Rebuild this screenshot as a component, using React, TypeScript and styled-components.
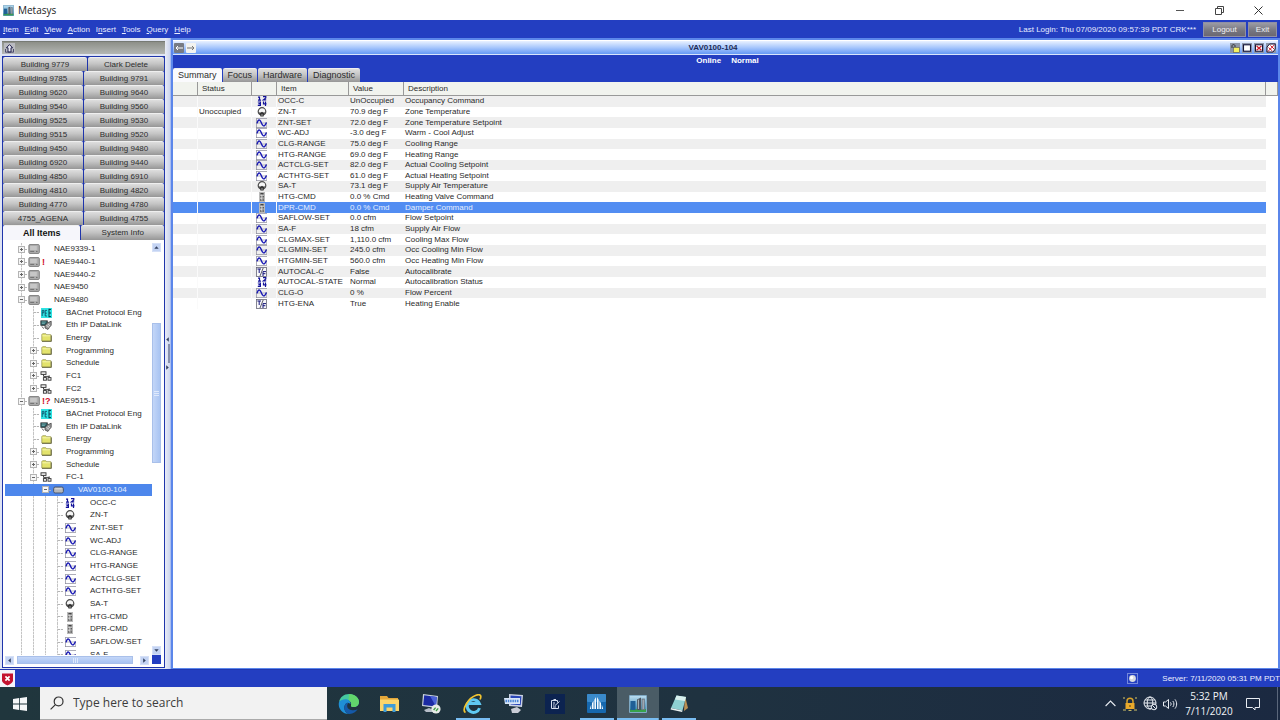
import React from "react";
import styled, { createGlobalStyle, css } from "styled-components";

const ui = `"Liberation Sans", Arial, sans-serif`;
const segoe = `"Open Sans", "Noto Sans", sans-serif`;
const blue = "#233ec1";

const Global = createGlobalStyle`
  *, *::before, *::after { box-sizing: border-box; }
  body { margin: 0; overflow: hidden; background: #fff; color: #2a2a2a; font: 8px/10px ${ui}; }
  button, input { font: inherit; color: inherit; border: 0; margin: 0; padding: 0; border-radius: 0; background: none; }
  svg { display: block; flex: none; }
  ul { list-style: none; margin: 0; padding: 0; }
`;

/* ---------- window frame ---------- */

const Window = styled.div`
  display: flex;
  flex-direction: column;
  height: 100vh;
`;

const TitleBar = styled.header`
  display: flex;
  align-items: center;
  height: 20px;
  padding-left: 3px;
  gap: 4px;
  background: #fff;
  color: #222;
  font: 10px/18px ${segoe};
`;

const WindowButtons = styled.div`
  display: flex;
  margin-left: auto;
  padding-right: 2px;
`;

const WindowButton = styled.button`
  display: grid;
  place-items: center;
  width: 39px;
  height: 19px;
`;

const MenuBar = styled.nav`
  display: flex;
  align-items: center;
  height: 18px;
  padding: 1px 3px 0;
  gap: 6px;
  background: ${blue};
  color: #e8ecff;
`;

const MenuItem = styled.button`
  line-height: 10px;
`;

const Login = styled.span`
  margin-left: auto;
  margin-right: 1px;
`;

const SessionButtons = styled.div`
  display: flex;
  gap: 2px;
`;

const SessionButton = styled.button<{ $w: number }>`
  width: ${(p) => p.$w}px;
  height: 15px;
  color: #f0f0f4;
  background: linear-gradient(#9b9ba4, #75757f 60%, #6b6872);
  border: 1px solid #8f90a5;
`;

const Main = styled.main`
  display: flex;
  flex: 1;
  min-height: 0;
  background: #dfe4f3;
`;

/* ---------- navigation column ---------- */

const Side = styled.aside`
  display: flex;
  flex-direction: column;
  width: 165px;
  padding: 3px 0 1px 2px;
`;

const SideHeader = styled.div`
  display: flex;
  align-items: center;
  height: 13px;
  margin-bottom: 2px;
  padding-left: 2px;
  background: linear-gradient(#8d8f88, #b4b7b4);
  border-top: 1px solid #777a74;
`;

const HomeButton = styled.button`
  display: grid;
  place-items: center;
  width: 11px;
  height: 11px;
  background: #b9bac0;
`;

const SideBody = styled.div`
  display: flex;
  flex-direction: column;
  flex: 1;
  min-height: 0;
  padding: 1px;
  background: #1f35ab;
`;

const ButtonRow = styled.div<{ $cols: string }>`
  display: grid;
  grid-template-columns: ${(p) => p.$cols};
  column-gap: 1px;
`;

const grayTab = css`
  background: linear-gradient(#dedede, #c4c4c4 45%, #969696);
  border-top: 1px solid #efefef;
  border-radius: 2px 2px 0 0;
  color: #2c2c2c;
`;

const ViewButton = styled.button`
  height: 14px;
  line-height: 13px;
  ${grayTab}
`;

const SideTab = styled.button<{ $active?: boolean }>`
  height: 15px;
  line-height: 14px;
  ${grayTab}
  ${(p) => p.$active && css`background: #f6f6fb; color: #111; font-weight: bold; font-size: 9px;`}
`;

const TreePane = styled.div`
  display: grid;
  grid-template-columns: 1fr 12px;
  grid-template-rows: 1fr 12px;
  flex: 1;
  min-height: 0;
  background: #fff;
`;

const TreeView = styled.div`
  min-height: 0;
  overflow: hidden;
  padding: 3px 0 0 2px;
`;

const TreeList = styled.ul`
  display: grid;
  grid-auto-rows: 1fr;
  height: 418px;
`;

const TreeRow = styled.li<{ $selected?: boolean }>`
  display: flex;
  align-items: center;
  min-height: 0;
  padding-left: 10px;
  white-space: nowrap;
  background: ${(p) => (p.$selected ? "#4d87ec" : "transparent")};
  color: ${(p) => (p.$selected ? "#e6efff" : "#2a2a2a")};
`;

const Guide = styled.span<{ $line?: boolean; $end?: boolean; $branch?: boolean }>`
  display: flex;
  align-self: stretch;
  align-items: center;
  flex: none;
  width: 12px;
  padding-left: 3px;
  background-image: ${(p) =>
    [
      p.$line ? "repeating-linear-gradient(#c4c4c4 0 2px, #e8e8e8 2px 3px)" : "none",
      p.$branch ? "repeating-linear-gradient(90deg, #b4b4b4 0 2px, #eee 2px 3px)" : "none",
    ].join(", ")};
  background-repeat: no-repeat;
  background-size: 1px ${(p) => (p.$end ? "50%" : "100%")}, 6px 1px;
  background-position: 6px 0, 7px 6px;
`;

const Toggle = styled.button`
  width: 7px;
  height: 7px;
`;

const TreeIcon = styled.span`
  display: grid;
  place-items: center;
  flex: none;
  width: 14px;
`;

const Mark = styled.span`
  flex: none;
  width: 13px;
  padding-left: 1px;
  color: #d0102a;
  font-size: 9px;
  font-weight: bold;
`;

const VScroll = styled.div`
  display: flex;
  flex-direction: column;
  justify-content: space-between;
  align-items: flex-start;
  padding: 3px 0 0 0;
`;

const HScroll = styled.div`
  display: flex;
  align-items: center;
  justify-content: space-between;
  padding: 0 3px 2px 2px;
`;

const ScrollButton = styled.button`
  display: grid;
  place-items: center;
  width: 9px;
  height: 9px;
  background: #c3d3f3;
  border: 1px solid #d5e0f7;
`;

const Thumb = styled.div<{ $vertical?: boolean }>`
  display: grid;
  place-items: center;
  background: linear-gradient(#c3d6f8, #a9c4f2);
  border: 1px solid #a9c0ea;
  ${(p) =>
    p.$vertical
      ? css`width: 9px; flex: 0 0 140px; margin-top: 71px; margin-bottom: auto; background: linear-gradient(90deg, #c3d6f8, #a9c4f2);`
      : css`height: 8px; flex: 0 0 116px; margin: 0 auto 0 3px;`}
`;

const Corner = styled.div`
  width: 9px;
  height: 9px;
  background: ${blue};
`;

const Splitter = styled.div`
  display: flex;
  flex-direction: column;
  align-items: flex-end;
  justify-content: center;
  gap: 2px;
  width: 6px;
  background: linear-gradient(90deg, #e9ecf6, #ccd5ee);
  border-right: 1px solid #a9bdf0;
`;

const SplitLine = styled.div`
  width: 2px;
  height: 19px;
  background: #8790ad;
`;

/* ---------- detail panel ---------- */

const Panel = styled.section`
  display: flex;
  flex-direction: column;
  flex: 1;
  min-width: 0;
  border: solid #5b86ea;
  border-width: 2px 2px 1px 2px;
  background: #fff;
`;

const PanelBar = styled.div`
  display: grid;
  grid-template-columns: auto 1fr auto;
  align-items: center;
  height: 15px;
  padding: 1px 2px 0 1px;
  background: linear-gradient(#e9f1ff, #b5d0fd 40%, #6599f6);
  border-top: 1px solid #fff;
  border-bottom: 1px solid #d8e4fc;
`;

const IconGroup = styled.div`
  display: flex;
  gap: 2px;
`;

const NavButton = styled.button<{ $dark?: boolean }>`
  display: grid;
  place-items: center;
  width: 10px;
  height: 10px;
  border-radius: 1px;
  background: ${(p) => (p.$dark ? "#777b84" : "#f3f3f0")};
`;

const PanelTitle = styled.h1`
  margin: 0;
  text-align: center;
  font: bold 8px/10px ${ui};
  color: #1b2a55;
`;

const PanelHead = styled.div`
  display: flex;
  flex-direction: column;
  justify-content: space-between;
  height: 27px;
  background: ${blue};
`;

const Status = styled.div`
  display: flex;
  justify-content: center;
  gap: 10px;
  padding: 1px 0 0 4px;
  color: #fff;
  font-weight: bold;
`;

const Tabs = styled.div`
  display: flex;
  gap: 1px;
`;

const Tab = styled.button<{ $active?: boolean }>`
  height: 14px;
  padding: 0 5px;
  font-size: 9px;
  line-height: 13px;
  ${grayTab}
  ${(p) => p.$active && css`background: #fafafd;`}
`;

const Table = styled.table`
  width: 100%;
  height: 227px;
  table-layout: fixed;
  border-collapse: separate;
  border-spacing: 0;
`;

const HeadRow = styled.tr`
  height: 14px;
`;

const HeadCell = styled.th`
  height: 14px;
  padding: 1px 0 0 4px;
  text-align: left;
  font-weight: normal;
  line-height: 10px;
  background: #f1f3ee;
  border-right: 1px solid #999;
  border-bottom: 1px solid #999;
`;

const Row = styled.tr<{ $selected?: boolean }>`
  color: ${(p) => (p.$selected ? "#e6efff" : "#2a2a2a")};
  &:nth-child(odd) td:not(:last-child) { background: #efefef; }
  ${(p) => p.$selected && css`&& td:not(:last-child) { background: #528df2; }`}
`;

const Cell = styled.td<{ $rule?: boolean }>`
  padding: 0 0 0 1px;
  line-height: 10px;
  white-space: nowrap;
  border-right: ${(p) => (p.$rule ? "1px solid #fafafa" : "0")};
`;

const CellIcon = styled.span`
  display: grid;
  justify-content: center;
  padding-right: 6px;
`;

/* ---------- status bar and taskbar ---------- */

const StatusBar = styled.footer`
  display: flex;
  align-items: center;
  height: 18px;
  background: ${blue};
  color: #eef1ff;
  border-top: 1px solid #1f37b0;
`;

const ShieldBox = styled.div`
  display: grid;
  place-items: center;
  width: 15px;
  height: 17px;
  margin-right: auto;
  background: #f4f4fa;
`;

const ServerTime = styled.span`
  padding-left: 24px;
`;

const TaskBar = styled.div`
  display: flex;
  height: 33px;
  background: linear-gradient(90deg, #20363d, #1f3240 55%, #1b2941);
`;

const StartButton = styled.button`
  display: grid;
  place-items: center;
  width: 40px;
`;

const Search = styled.label`
  display: flex;
  align-items: center;
  gap: 9px;
  width: 287px;
  padding-left: 10px;
  background: #f2f2f2;
  border-bottom: 1px solid #aaa;
  color: #333;
`;

const SearchInput = styled.input`
  flex: 1;
  min-width: 0;
  font: 12px/20px ${segoe};
  outline: 0;
  &::placeholder { color: #3c3c3c; opacity: 1; }
`;

const Apps = styled.div`
  display: flex;
  width: 372px;
  margin-left: 1px;
`;

const AppButton = styled.button<{ $open?: boolean; $active?: boolean }>`
  flex: 1;
  display: grid;
  place-items: center;
  background: ${(p) =>
    p.$active
      ? "linear-gradient(#79bdf2, #79bdf2) center bottom / 100% 2px no-repeat, #4a5c66"
      : p.$open
        ? "linear-gradient(#79bdf2, #79bdf2) center bottom / 34px 2px no-repeat"
        : "none"};
`;

const Tray = styled.div`
  display: flex;
  align-items: center;
  margin-left: auto;
  color: #e8ecf2;
`;

const TrayButton = styled.button`
  display: grid;
  place-items: center;
  width: 20px;
  height: 33px;
`;

const Clock = styled.div`
  display: flex;
  flex-direction: column;
  width: 58px;
  text-align: center;
  font: 10px/15px ${segoe};
  color: #f2f4f8;
`;

const Notifications = styled(TrayButton)`
  width: 30px;
`;

const DesktopEdge = styled.div`
  width: 3px;
  height: 33px;
  margin-left: 9px;
  border-left: 1px solid #5b677b;
`;

/* ---------- icons ---------- */

type Kind = "num" | "temp" | "wave" | "cmd" | "tf" | "nae" | "folder" | "net" | "bac" | "eth" | "vav";

const Icon = ({ kind }: { kind: Kind }) => {
  switch (kind) {
    case "num":
      return (
        <svg width="10" height="10" viewBox="0 0 10 10" fill="none" stroke="#12129a" strokeWidth="1.2">
          <path d="M1 1.200h1.500V4M1 4.100h3M6 .7h2.800v1.300L6.400 3.900h2.800" />
          <path d="M.8 6h2.600v3.400H.8M1.400 7.700h2M6.500 5.400v2.500h3M8.500 5.400V10" />
        </svg>
      );
    case "temp":
      return (
        <svg width="10" height="10" viewBox="0 0 10 10" fill="none">
          <circle cx="5" cy="4.500" r="3.800" fill="#f6f6f6" stroke="#4a4a4a" strokeWidth="1.200" />
          <path d="M1.800 5.600h2L5 4.800l1.200.8h2L6.600 8.400v1.200H3.400V8.400z" fill="#333" />
          <path d="M4.200 8h1.600" stroke="#ddd" strokeWidth=".8" />
        </svg>
      );
    case "wave":
      return (
        <svg width="11" height="10" viewBox="0 0 11 10" fill="none">
          <path d="M.5 0v10M0 9.500h11M.5.5H11" stroke="#8a8a9a" strokeWidth=".7" />
          <path d="M0 5h11M10.600 4v5" stroke="#8a8a9a" strokeWidth=".6" />
          <path d="M1 5.400C2 1.400 3.800.8 5 4s3 6.600 5.400.6" stroke="#1a1ab4" strokeWidth="1.400" />
        </svg>
      );
    case "cmd":
      return (
        <svg width="8" height="10" viewBox="0 0 8 10">
          <rect x="1" y="0" width="6" height="10" fill="#b9b9b9" />
          <path d="M2.400 1h3.200v1.600H2.400zM2.400 4h1.200v1.400H2.400zM4.600 4h1.200v1.400H4.600zM2.400 7h1.200v2H2.400zM4.600 6.600h1v2.400h-1z" fill="#444" />
          <path d="M3.700 2.500v6" stroke="#eee" strokeWidth=".6" />
        </svg>
      );
    case "tf":
      return (
        <svg width="11" height="10" viewBox="0 0 11 10" fill="none">
          <rect x=".5" y=".5" width="10" height="9" fill="#f7f7fa" stroke="#667" strokeWidth=".8" />
          <path d="M1.400 2h3.600M3.200 2V6M7 9V4.600h3M7 6.700h2.400" stroke="#15157a" strokeWidth="1" />
          <path d="M7.200 1L4 9" stroke="#334" strokeWidth=".8" />
        </svg>
      );
    case "nae":
      return (
        <svg width="12" height="10" viewBox="0 0 12 10">
          <rect x=".9" y=".6" width="10.400" height="8.800" rx="1" fill="#b0b0b0" stroke="#747474" strokeWidth=".9" />
          <path d="M2.200 3h6.600M2.200 5h6.600" stroke="#e2e2e2" strokeWidth=".9" />
          <path d="M2.200 7.400h4M8 7.400h1.600" stroke="#666" strokeWidth=".9" />
        </svg>
      );
    case "vav":
      return (
        <svg width="11" height="8" viewBox="0 0 11 8">
          <rect x=".6" y="1" width="9.800" height="6" rx="1.600" fill="#b4b6ba" stroke="#44506a" strokeWidth=".9" />
          <path d="M2.200 2.800h6.600" stroke="#e8e8e8" strokeWidth=".8" />
        </svg>
      );
    case "folder":
      return (
        <svg width="11" height="9" viewBox="0 0 11 9">
          <path d="M.8 8V1.600l.8-.9h3.200l.8 1h4.200V8z" fill="#e3e36c" stroke="#8f8f4a" strokeWidth=".7" />
          <path d="M1.300 2.800h8" stroke="#fbfbc0" strokeWidth=".8" />
          <path d="M1 8.400h9.400V2.400" stroke="#55552a" strokeWidth=".8" fill="none" />
        </svg>
      );
    case "net":
      return (
        <svg width="12" height="10" viewBox="0 0 12 10" fill="#eee" stroke="#333" strokeWidth=".9">
          <path d="M3.500 3v2.400h5.700M5 5.400v2M9.200 4.400v3" fill="none" />
          <rect x="1" y=".8" width="5" height="2.600" />
          <rect x="3.400" y="6.600" width="3" height="2.600" />
          <rect x="8" y="6.600" width="3" height="2.600" />
        </svg>
      );
    case "bac":
      return (
        <svg width="11" height="10" viewBox="0 0 11 10" fill="none">
          <rect width="11" height="10" fill="#2fe3e3" />
          <path d="M1.200 8V2.400h1.600v2.400H1.200M6 2.400H4.200V8H6M4.200 5.200h1.600" stroke="#0a4560" strokeWidth=".8" />
          <path d="M8 .8v8.400M8 1.400h2M8 5h2M8 8.600h2" stroke="#063a48" strokeWidth="1" />
        </svg>
      );
    case "eth":
      return (
        <svg width="12" height="10" viewBox="0 0 12 10">
          <rect x=".8" y=".8" width="6.600" height="4.600" fill="#2c5b60" stroke="#333" strokeWidth=".7" />
          <path d="M1.800 2h4M1.800 3.400h3" stroke="#8fd0d0" strokeWidth=".7" />
          <path d="M5 5.200L8 2.600l3.200-1.400v4L8 9.400 5 8z" fill="#999" stroke="#333" strokeWidth=".7" />
          <path d="M6.400 5.400l3 2M7.800 4l2.400 2" stroke="#eee" strokeWidth=".7" />
          <path d="M1.600 6.400L4 8.600" stroke="#666" />
        </svg>
      );
  }
};

const ToggleGlyph = ({ open }: { open: boolean }) => (
  <svg width="7" height="7" viewBox="0 0 7 7">
    <rect x=".5" y=".5" width="6" height="6" fill="#f6f6f6" stroke="#b4b4b4" />
    <path d={open ? "M2 3.500h3" : "M2 3.500h3M3.500 2v3"} stroke="#666" />
  </svg>
);

const Arrow = ({ rotate }: { rotate: number }) => (
  <svg width="5" height="5" viewBox="0 0 5 5">
    <path d="M.3 3.800L2.500 1.200l2.200 2.600z" fill="#33415f" transform={`rotate(${rotate} 2.500 2.500)`} />
  </svg>
);

const MetasysIcon = ({ size }: { size: number }) => (
  <svg width={size} height={size} viewBox="0 0 18 18">
    <defs>
      <linearGradient id="sky" x2="0" y2="1">
        <stop stopColor="#b9dcf0" />
        <stop offset="1" stopColor="#2a7fae" />
      </linearGradient>
    </defs>
    <rect width="18" height="18" rx="1" fill="#7fa9c4" />
    <rect x="1" y="1" width="16" height="16" fill="url(#sky)" />
    <path d="M1 14h16v3H1z" fill="#37a14b" />
    <path d="M1.500 6h5v9h-5z" fill="#1f5f96" />
    <path d="M8 4.400L12 2.600V15H8z" fill="#4c5662" />
    <path d="M12.600 3.600h3.200V15h-3.200z" fill="#6d7985" />
    <path d="M9.400 4.600V14M14.200 4.600V14" stroke="#c7d0d6" strokeWidth=".8" />
  </svg>
);

/* ---------- data ---------- */

const menus = ["Item", "Edit", "View", "Action", "Insert", "Tools", "Query", "Help"];
const underlineAt: Record<string, number> = { Insert: 1 };

const views: [string, string][] = [
  ["Building 9779", "Clark Delete"],
  ["Building 9785", "Building 9791"],
  ["Building 9620", "Building 9640"],
  ["Building 9540", "Building 9560"],
  ["Building 9525", "Building 9530"],
  ["Building 9515", "Building 9520"],
  ["Building 9450", "Building 9480"],
  ["Building 6920", "Building 9440"],
  ["Building 4850", "Building 6910"],
  ["Building 4810", "Building 4820"],
  ["Building 4770", "Building 4780"],
  ["4755_AGENA", "Building 4755"],
];

type Node = { label: string; depth: number; icon: Kind; toggle?: "+" | "-"; mark?: string; last?: boolean; selected?: boolean };

const n = (depth: number, icon: Kind, label: string, toggle?: "+" | "-", extra: Partial<Node> = {}): Node => ({
  depth, icon, label, toggle, ...extra,
});

const tree: Node[] = [
  n(0, "nae", "NAE9339-1", "+"),
  n(0, "nae", "NAE9440-1", "+", { mark: "!" }),
  n(0, "nae", "NAE9440-2", "+"),
  n(0, "nae", "NAE9450", "+"),
  n(0, "nae", "NAE9480", "-"),
  n(1, "bac", "BACnet Protocol Eng"),
  n(1, "eth", "Eth IP DataLink"),
  n(1, "folder", "Energy"),
  n(1, "folder", "Programming", "+"),
  n(1, "folder", "Schedule", "+"),
  n(1, "net", "FC1", "+"),
  n(1, "net", "FC2", "+", { last: true }),
  n(0, "nae", "NAE9515-1", "-", { mark: "!?" }),
  n(1, "bac", "BACnet Protocol Eng"),
  n(1, "eth", "Eth IP DataLink"),
  n(1, "folder", "Energy"),
  n(1, "folder", "Programming", "+"),
  n(1, "folder", "Schedule", "+"),
  n(1, "net", "FC-1", "-"),
  n(2, "vav", "VAV0100-104", "-", { selected: true }),
  n(3, "num", "OCC-C"),
  n(3, "temp", "ZN-T"),
  n(3, "wave", "ZNT-SET"),
  n(3, "wave", "WC-ADJ"),
  n(3, "wave", "CLG-RANGE"),
  n(3, "wave", "HTG-RANGE"),
  n(3, "wave", "ACTCLG-SET"),
  n(3, "wave", "ACTHTG-SET"),
  n(3, "temp", "SA-T"),
  n(3, "cmd", "HTG-CMD"),
  n(3, "cmd", "DPR-CMD"),
  n(3, "wave", "SAFLOW-SET"),
  n(3, "wave", "SA-F"),
];

const points: [string, Kind, string, string, string][] = [
  ["", "num", "OCC-C", "UnOccupied", "Occupancy Command"],
  ["Unoccupied", "temp", "ZN-T", "70.9 deg F", "Zone Temperature"],
  ["", "wave", "ZNT-SET", "72.0 deg F", "Zone Temperature Setpoint"],
  ["", "wave", "WC-ADJ", "-3.0 deg F", "Warm - Cool Adjust"],
  ["", "wave", "CLG-RANGE", "75.0 deg F", "Cooling Range"],
  ["", "wave", "HTG-RANGE", "69.0 deg F", "Heating Range"],
  ["", "wave", "ACTCLG-SET", "82.0 deg F", "Actual Cooling Setpoint"],
  ["", "wave", "ACTHTG-SET", "61.0 deg F", "Actual Heating Setpoint"],
  ["", "temp", "SA-T", "73.1 deg F", "Supply Air Temperature"],
  ["", "cmd", "HTG-CMD", "0.0 % Cmd", "Heating Valve Command"],
  ["", "cmd", "DPR-CMD", "0.0 % Cmd", "Damper Command"],
  ["", "wave", "SAFLOW-SET", "0.0 cfm", "Flow Setpoint"],
  ["", "wave", "SA-F", "18 cfm", "Supply Air Flow"],
  ["", "wave", "CLGMAX-SET", "1,110.0 cfm", "Cooling Max Flow"],
  ["", "wave", "CLGMIN-SET", "245.0 cfm", "Occ Cooling Min Flow"],
  ["", "wave", "HTGMIN-SET", "560.0 cfm", "Occ Heating Min Flow"],
  ["", "tf", "AUTOCAL-C", "False", "Autocalibrate"],
  ["", "num", "AUTOCAL-STATE", "Normal", "Autocalibration Status"],
  ["", "wave", "CLG-O", "0 %", "Flow Percent"],
  ["", "tf", "HTG-ENA", "True", "Heating Enable"],
];

/* ---------- sections ---------- */

const Sidebar = () => (
  <Side>
    <SideHeader>
      <HomeButton aria-label="Up one level">
        <svg width="9" height="9" viewBox="0 0 9 9">
          <path d="M4.500.6L7.600 3.800H6V8H3V3.800H1.400z" fill="#e8e8f2" stroke="#23234f" strokeWidth="1" />
          <path d="M.5 5v3.200h8V5" fill="none" stroke="#33335a" strokeWidth=".8" />
        </svg>
      </HomeButton>
    </SideHeader>
    <SideBody>
      {views.map(([a, b], i) => (
        <ButtonRow key={a} $cols={i === 0 ? "84fr 76fr" : "1fr 1fr"}>
          <ViewButton>{a}</ViewButton>
          <ViewButton>{b}</ViewButton>
        </ButtonRow>
      ))}
      <ButtonRow $cols="77fr 82fr">
        <SideTab $active>All Items</SideTab>
        <SideTab>System Info</SideTab>
      </ButtonRow>
      <TreePane>
        <TreeView>
          <TreeList>
            {tree.map((t, i) => (
              <TreeRow key={i} $selected={t.selected}>
                {Array.from({ length: t.depth }, (_, d) => <Guide key={d} $line={!t.selected} />)}
                <Guide $line={!t.selected} $end={t.last} $branch>
                  {t.toggle && (
                    <Toggle aria-label={`Toggle ${t.label}`}>
                      <ToggleGlyph open={t.toggle === "-"} />
                    </Toggle>
                  )}
                </Guide>
                <TreeIcon><Icon kind={t.icon} /></TreeIcon>
                <Mark>{t.mark}</Mark>
                {t.label}
              </TreeRow>
            ))}
          </TreeList>
        </TreeView>
        <VScroll>
          <ScrollButton aria-label="Scroll up"><Arrow rotate={0} /></ScrollButton>
          <Thumb $vertical>
            <svg width="5" height="5" viewBox="0 0 5 5"><path d="M0 .5h5M0 2.500h5M0 4.500h5" stroke="#dfe9fc" /></svg>
          </Thumb>
          <ScrollButton aria-label="Scroll down"><Arrow rotate={180} /></ScrollButton>
        </VScroll>
        <HScroll>
          <ScrollButton aria-label="Scroll left"><Arrow rotate={270} /></ScrollButton>
          <Thumb>
            <svg width="5" height="5" viewBox="0 0 5 5"><path d="M.5 0v5M2.500 0v5M4.500 0v5" stroke="#dfe9fc" /></svg>
          </Thumb>
          <ScrollButton aria-label="Scroll right"><Arrow rotate={90} /></ScrollButton>
        </HScroll>
        <Corner />
      </TreePane>
    </SideBody>
  </Side>
);

const PanelIcon = ({ kind }: { kind: "lock" | "max" | "close" | "closeAll" }) => (
  <svg width="10" height="10" viewBox="0 0 10 10" fill="none">
    <rect width="10" height="10" fill="#8d96a8" />
    {kind === "lock" && (
      <>
        <path d="M2 5V2.600a1.600 1.600 0 013 0V4" stroke="#333" />
        <rect x="3.400" y="4.400" width="6" height="5" fill="#f5f060" stroke="#555" strokeWidth=".6" />
      </>
    )}
    {kind === "max" && <rect x="1.500" y="1.800" width="7" height="6.400" fill="#fff" stroke="#15153a" strokeWidth="1.100" />}
    {kind === "close" && (
      <>
        <rect x="1.500" y="1.800" width="7" height="6.400" fill="#fff" stroke="#15153a" />
        <path d="M2.600 3l4.800 4.200M7.400 3L2.600 7.200" stroke="#d01c2c" strokeWidth="1.200" />
      </>
    )}
    {kind === "closeAll" && (
      <>
        <path d="M3.600 1h5.600v5L7 9H1V4z" fill="#fff" stroke="#15153a" />
        <path d="M2 8.400l6.400-6.600M2.600 4.600L6.400 8M4.400 2.400l3.600 3.600" stroke="#d01c2c" />
      </>
    )}
  </svg>
);

const Detail = () => (
  <Panel>
    <PanelBar>
      <IconGroup>
        <NavButton $dark aria-label="Back">
          <svg width="8" height="6" viewBox="0 0 8 6" fill="none" stroke="#fff"><path d="M8 3H1M3 1L1 3l2 2" /></svg>
        </NavButton>
        <NavButton aria-label="Forward">
          <svg width="8" height="6" viewBox="0 0 8 6" fill="none" stroke="#777"><path d="M0 3h7M5 1l2 2-2 2" /></svg>
        </NavButton>
      </IconGroup>
      <PanelTitle>VAV0100-104</PanelTitle>
      <IconGroup>
        <button aria-label="Lock"><PanelIcon kind="lock" /></button>
        <button aria-label="Maximize"><PanelIcon kind="max" /></button>
        <button aria-label="Close"><PanelIcon kind="close" /></button>
        <button aria-label="Close all"><PanelIcon kind="closeAll" /></button>
      </IconGroup>
    </PanelBar>
    <PanelHead>
      <Status><span>Online</span><span>Normal</span></Status>
      <Tabs>
        <Tab $active>Summary</Tab>
        <Tab>Focus</Tab>
        <Tab>Hardware</Tab>
        <Tab>Diagnostic</Tab>
      </Tabs>
    </PanelHead>
    <Table>
      <colgroup>
        {[25, 54, 25, 72, 55].map((w, i) => <col key={i} width={w} />)}
        <col />
        <col width={12} />
      </colgroup>
      <thead>
        <HeadRow>
          {["", "Status", "", "Item", "Value", "Description", ""].map((h, i) => <HeadCell key={i}>{h}</HeadCell>)}
        </HeadRow>
      </thead>
      <tbody>
        {points.map(([status, icon, item, value, text]) => (
          <Row key={item} $selected={item === "DPR-CMD"}>
            <Cell $rule />
            <Cell $rule>{status}</Cell>
            <Cell $rule><CellIcon><Icon kind={icon} /></CellIcon></Cell>
            <Cell>{item}</Cell>
            <Cell>{value}</Cell>
            <Cell>{text}</Cell>
            <Cell />
          </Row>
        ))}
      </tbody>
    </Table>
  </Panel>
);

const taskApps: { name: string; open?: boolean; active?: boolean; icon: React.ReactNode }[] = [
  {
    name: "Edge",
    icon: (
      <svg width="21" height="20" viewBox="0 0 21 20">
        <path d="M1 8C2 3 6 0 11 0c6 0 10 4 10 8 0 3-2.500 5-5.400 5-2 0-2.900-.8-2.600-1.600C14.600 8.600 12 6 8.600 6 5 6 2.500 7 1 8z" fill="#45c9a0" />
        <path d="M11 0c6 0 10 4 10 8 0 3-2.500 5-5.400 5-2 0-2.900-.8-2.600-1.600.8-2-.4-4.200-2.400-5.200z" fill="#62d66c" />
        <path d="M1 8c-1.400 6 3 12 9.600 12C6 18 5 12.500 8 9.400c1-1 2.600-1 4.400.6C13 7 10 5 7.400 5.200 4.400 5.400 2 6.600 1 8z" fill="#1f8fd6" />
        <path d="M8 9.400C5 12.500 6 18 10.600 20c4 .2 7.400-2 9-4.800-4 2-10 .8-10.400-3C9 11 9.600 10 10.400 9 9.400 8.800 8.600 8.800 8 9.400z" fill="#1559a8" />
      </svg>
    ),
  },
  {
    name: "File Explorer",
    icon: (
      <svg width="19" height="16" viewBox="0 0 19 16">
        <path d="M0 0h7l1.500 2H18v3H0z" fill="#e3a63a" />
        <path d="M0 3.500h19V15H0z" fill="#fbd56a" />
        <path d="M3.500 8h12v8h-3v-4.500h-6V16h-3z" fill="#3d9bd8" />
      </svg>
    ),
  },
  {
    name: "Remote Desktop",
    icon: (
      <svg width="19" height="20" viewBox="0 0 19 20">
        <path d="M1 0l15 2-1 12L0 12z" fill="#c9d2de" />
        <path d="M2.200 1.300l12.600 1.600-.9 9.700L1.200 11z" fill="#1b2ba4" />
        <path d="M8 2l6.800.9-.9 9.700z" fill="#4a62d8" />
        <path d="M2 16l5-2 5 2-1 2H4z" fill="#b7bec9" />
        <circle cx="14" cy="15" r="4.600" fill="#e7ebe7" />
        <path d="M11.600 16l2-2.400M14 17l2.200-2.600" stroke="#3d9a44" strokeWidth="1.300" />
      </svg>
    ),
  },
  {
    name: "Internet Explorer",
    open: true,
    icon: (
      <svg width="20" height="20" viewBox="0 0 20 20" fill="none">
        <path d="M16.500 13.500A6.300 6.300 0 1116.300 9H5" stroke="#5fc9f3" strokeWidth="3" transform="translate(0 .6)" />
        <path d="M2.500 18.500C-1.500 16 5 4 13 1.200c5-1.700 5.600 1 4 4.300" stroke="#f0c431" strokeWidth="1.700" />
      </svg>
    ),
  },
  {
    name: "Network Places",
    icon: (
      <svg width="20" height="20" viewBox="0 0 20 20">
        <path d="M5 0l14 1-1 12-13-1z" fill="#cbd2e4" />
        <path d="M6.500 1.500l11 .8-.8 9-10-.7z" fill="#2946b8" />
        <path d="M0 4h16v6H1z" fill="#d8e6f8" />
        <path d="M1.500 7h13" stroke="#4c86d8" strokeWidth="2.400" strokeDasharray="1.500 .8" />
        <path d="M7 15l6-2 4 3-3 3H8z" fill="#c9ccd6" />
      </svg>
    ),
  },
  {
    name: "Notes",
    icon: (
      <svg width="20" height="20" viewBox="0 0 20 20" fill="none">
        <rect width="20" height="20" fill="#0c2350" />
        <path d="M6.500 6.500h6v2M6.500 6.500v8h7v-3M8.500 5.500h2.500M8 9h2M8 11h1.500M8 13h3M10 11.500l4.500-4" stroke="#d5deee" />
      </svg>
    ),
  },
  {
    name: "Field Tools",
    open: true,
    icon: (
      <svg width="19" height="19" viewBox="0 0 19 19">
        <rect width="19" height="19" rx="1" fill="#1668ae" />
        <rect width="19" height="8" rx="1" fill="#3a8acb" />
        <path d="M9 3v12H7.400V5.800zM10 3v12h1.600V5.800zM6.600 7v8H5V9zM12.400 7v8H14V9zM4.200 10.500V15H2.800zM14.800 10.500V15h1.400z" fill="#f2f8fd" />
      </svg>
    ),
  },
  { name: "Metasys", active: true, icon: <MetasysIcon size={18} /> },
  {
    name: "Notepad",
    open: true,
    icon: (
      <svg width="19" height="19" viewBox="0 0 19 19">
        <path d="M15 2l3 12-4 3z" fill="#b98f52" />
        <path d="M6.500 1.500L16 3l-3.500 13.500L1 14z" fill="#8fd0d2" />
        <path d="M6.500 1.500L16 3l-1.200 4L5 5.500z" fill="#d9f0ee" />
        <path d="M1 14l11.500 2.500-.4 1.500L.6 15.400z" fill="#e9f1f1" />
      </svg>
    ),
  },
];

export default function App() {
  return (
    <Window>
      <Global />
      <TitleBar>
        <MetasysIcon size={11} />
        Metasys
        <WindowButtons>
          <WindowButton aria-label="Minimize">
            <svg width="9" height="9" viewBox="0 0 9 9"><path d="M0 4.500h8" stroke="#555" /></svg>
          </WindowButton>
          <WindowButton aria-label="Restore">
            <svg width="9" height="9" viewBox="0 0 9 9" fill="none" stroke="#444">
              <path d="M.5 2.500h6v6h-6zM2.500 2V.5h6v6H7" />
            </svg>
          </WindowButton>
          <WindowButton aria-label="Close window">
            <svg width="9" height="9" viewBox="0 0 9 9" stroke="#333"><path d="M.5.5l8 8M8.500.5l-8 8" /></svg>
          </WindowButton>
        </WindowButtons>
      </TitleBar>
      <MenuBar>
        {menus.map((m) => {
          const at = underlineAt[m] ?? 0;
          return (
            <MenuItem key={m}>{m.slice(0, at)}<u>{m[at]}</u>{m.slice(at + 1)}</MenuItem>
          );
        })}
        <Login>Last Login: Thu 07/09/2020 09:57:39 PDT CRK***</Login>
        <SessionButtons>
          <SessionButton $w={43}>Logout</SessionButton>
          <SessionButton $w={29}>Exit</SessionButton>
        </SessionButtons>
      </MenuBar>
      <Main>
        <Sidebar />
        <Splitter>
          <Arrow rotate={270} />
          <SplitLine />
          <Arrow rotate={90} />
        </Splitter>
        <Detail />
      </Main>
      <StatusBar>
        <ShieldBox>
          <svg width="13" height="14" viewBox="0 0 13 14">
            <path d="M1 1.500h11v6.800C12 11 8.500 12.600 6.500 13.500 4.500 12.600 1 11 1 8.300z" fill="#c4122f" />
            <path d="M4.400 4.400l4.200 4.200M8.600 4.400L4.400 8.600" stroke="#fff" strokeWidth="1.700" />
          </svg>
        </ShieldBox>
        <svg width="11" height="11" viewBox="0 0 11 11">
          <rect x=".5" y=".5" width="10" height="10" fill="none" stroke="#c9d2f5" strokeDasharray="1 1" />
          <circle cx="5.500" cy="5.500" r="3.400" fill="#d8dae0" />
          <circle cx="4.600" cy="4.600" r="1.600" fill="#fff" />
        </svg>
        <ServerTime>Server: 7/11/2020 05:31 PM PDT</ServerTime>
      </StatusBar>
      <TaskBar>
        <StartButton aria-label="Start">
          <svg width="14" height="14" viewBox="0 0 14 14" fill="#f4f6f8">
            <path d="M0 2l6.200-.9v5.500H0zM7 1l7-1v6.600H7zM0 7.400h6.200v5.500L0 12zM7 7.400h7V14l-7-1z" />
          </svg>
        </StartButton>
        <Search>
          <svg width="14" height="14" viewBox="0 0 14 14" fill="none" stroke="#333" strokeWidth="1.200">
            <circle cx="8.600" cy="5.400" r="4.400" />
            <path d="M5.400 8.600L.6 13.400" />
          </svg>
          <SearchInput aria-label="Search" placeholder="Type here to search" />
        </Search>
        <Apps>
          {taskApps.map((a) => (
            <AppButton key={a.name} aria-label={a.name} $open={a.open} $active={a.active}>{a.icon}</AppButton>
          ))}
        </Apps>
        <Tray>
          <TrayButton aria-label="Show hidden icons">
            <svg width="11" height="7" viewBox="0 0 11 7" fill="none" stroke="currentColor" strokeWidth="1.100"><path d="M.6 6l4.900-4.900L10.400 6" /></svg>
          </TrayButton>
          <TrayButton aria-label="Security">
            <svg width="14" height="14" viewBox="0 0 14 14" fill="none">
              <path d="M4 6V4.200a3 3 0 016 0V6" stroke="#d9a32a" strokeWidth="1.500" />
              <rect x="2.500" y="6" width="9" height="6" fill="#e8a92c" />
              <path d="M0 13h3M11 13h3M0 1h2M12 1h2M5.500 13.400h3" stroke="#d8c86a" />
              <path d="M7 8v2" stroke="#5a3c08" />
            </svg>
          </TrayButton>
          <TrayButton aria-label="Network">
            <svg width="15" height="15" viewBox="0 0 15 15" fill="none" stroke="currentColor">
              <circle cx="7" cy="7" r="6" />
              <ellipse cx="7" cy="7" rx="2.800" ry="6" />
              <path d="M1 7h12M2 4h10M2 10h6" />
              <circle cx="11" cy="11" r="2.800" fill="#1c2b42" />
              <path d="M9.200 9.200l3.600 3.600" />
            </svg>
          </TrayButton>
          <TrayButton aria-label="Volume">
            <svg width="15" height="12" viewBox="0 0 15 12" fill="none" stroke="currentColor">
              <path d="M.5 4h2L5.500 1.500v9L2.500 8h-2zM7.500 4.400c.8 1 .8 2.200 0 3.200M9.800 3c1.500 1.800 1.500 4.200 0 6M12 1.400c2.200 2.800 2.200 6.400 0 9.200" />
            </svg>
          </TrayButton>
          <Clock><span>5:32 PM</span><span>7/11/2020</span></Clock>
          <Notifications aria-label="Notifications">
            <svg width="14" height="14" viewBox="0 0 14 14" fill="none" stroke="currentColor">
              <path d="M.5 1.500h13v9h-4.500v2.500L6.500 10.500h-6z" />
            </svg>
          </Notifications>
          <DesktopEdge />
        </Tray>
      </TaskBar>
    </Window>
  );
}
